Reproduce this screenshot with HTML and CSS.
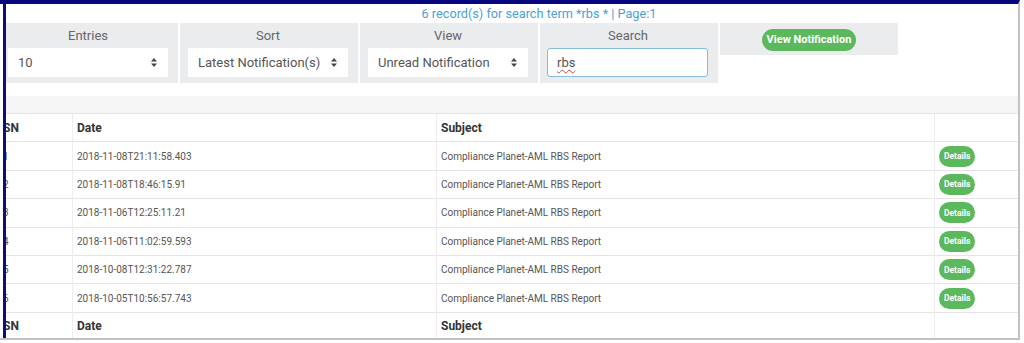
FILE: index.html
```html
<!DOCTYPE html>
<html lang="en">

<head>
    <meta charset="UTF-8">
    <title>Notifications</title>
    <link rel="stylesheet" href="styles.css">
</head>

<body>
    <div class="frame">
        <div class="page">
            <div class="resultInfo">6 record(s) for search term *rbs * | Page:1</div>

            <div class="filters">
                <div class="filterCol">
                    <div class="filterLabel">Entries</div>
                    <div class="selectBox"><span>10</span><span class="arrows"><svg width="6" height="9" viewBox="0 0 6 9"><path d="M3 0L6 3.5H0z M3 9L6 5.5H0z" fill="#444"/></svg></span></div>
                </div>
                <div class="filterCol">
                    <div class="filterLabel">Sort</div>
                    <div class="selectBox"><span>Latest Notification(s)</span><span class="arrows"><svg width="6" height="9" viewBox="0 0 6 9"><path d="M3 0L6 3.5H0z M3 9L6 5.5H0z" fill="#444"/></svg></span></div>
                </div>
                <div class="filterCol">
                    <div class="filterLabel">View</div>
                    <div class="selectBox"><span>Unread Notification</span><span class="arrows"><svg width="6" height="9" viewBox="0 0 6 9"><path d="M3 0L6 3.5H0z M3 9L6 5.5H0z" fill="#444"/></svg></span></div>
                </div>
                <div class="filterCol">
                    <div class="filterLabel">Search</div>
                    <div class="searchBox"><span class="typo">rbs</span></div>
                </div>
                <div class="filterCol short">
                    <button class="btnGreen">View Notification</button>
                </div>
            </div>

            <div class="band"></div>

            <table class="notifTable">
                <colgroup>
                    <col style="width:74px">
                    <col style="width:364px">
                    <col style="width:498px">
                    <col style="width:84px">
                </colgroup>
                <thead>
                    <tr>
                        <th>SN</th>
                        <th>Date</th>
                        <th>Subject</th>
                        <th></th>
                    </tr>
                </thead>
                <tbody>
                    <tr>
                        <td>1</td>
                        <td>2018-11-08T21:11:58.403</td>
                        <td>Compliance Planet-AML RBS Report</td>
                        <td><button class="btnDetails">Details</button></td>
                    </tr>
                    <tr>
                        <td>2</td>
                        <td>2018-11-08T18:46:15.91</td>
                        <td>Compliance Planet-AML RBS Report</td>
                        <td><button class="btnDetails">Details</button></td>
                    </tr>
                    <tr>
                        <td>3</td>
                        <td>2018-11-06T12:25:11.21</td>
                        <td>Compliance Planet-AML RBS Report</td>
                        <td><button class="btnDetails">Details</button></td>
                    </tr>
                    <tr>
                        <td>4</td>
                        <td>2018-11-06T11:02:59.593</td>
                        <td>Compliance Planet-AML RBS Report</td>
                        <td><button class="btnDetails">Details</button></td>
                    </tr>
                    <tr>
                        <td>5</td>
                        <td>2018-10-08T12:31:22.787</td>
                        <td>Compliance Planet-AML RBS Report</td>
                        <td><button class="btnDetails">Details</button></td>
                    </tr>
                    <tr>
                        <td>6</td>
                        <td>2018-10-05T10:56:57.743</td>
                        <td>Compliance Planet-AML RBS Report</td>
                        <td><button class="btnDetails">Details</button></td>
                    </tr>
                </tbody>
                <tfoot>
                    <tr>
                        <th>SN</th>
                        <th>Date</th>
                        <th>Subject</th>
                        <th></th>
                    </tr>
                </tfoot>
            </table>
        </div>
    </div>
</body>

</html>
```

FILE: styles.css
```css
body {
    margin: 0;
    background: #fff;
    font-family: Roboto, "Liberation Sans", sans-serif;
}

.frame {
    width: 1018px;
    height: 334px;
    border-top: 4px solid #06067e;
    border-right: 2px solid #c2c2c2;
    border-bottom: 2px solid #c2c2c2;
    overflow: hidden;
}

.page {
    margin-left: 3px;
    border-left: 3px solid #0d0d80;
    height: 100%;
    overflow: hidden;
}

.resultInfo {
    height: 19px;
    line-height: 19px;
    font-size: 12.7px;
    color: #4a9fd9;
    text-align: center;
    padding-left: 54px;
}

/* filter bar */
.filters {
    display: flex;
    align-items: flex-start;
    gap: 2px;
    margin-left: -6px;
}

.filterCol {
    width: 160px;
    padding: 4px 10px 6px 8px;
    background: #ebecee;
}

.filterCol.short {
    height: 32px;
    padding: 5px 0 0;
    width: 178px;
    box-sizing: border-box;
    text-align: center;
}

.filterLabel {
    height: 17px;
    line-height: 17px;
    margin-bottom: 4px;
    font-size: 13px;
    color: #666;
    text-align: center;
}

.selectBox {
    height: 29px;
    display: flex;
    align-items: center;
    justify-content: space-between;
    padding: 0 11px 0 10px;
    background: #fff;
    font-size: 13px;
    color: #555;
}

.arrows {
    display: flex;
}

.searchBox {
    height: 27px;
    margin-left: -1px;
    line-height: 27px;
    padding-left: 9px;
    background: #fff;
    border: 1px solid #86bbe3;
    border-radius: 3px;
    font-size: 13px;
    color: #555;
}

.typo {
    text-decoration: underline wavy #e04040;
    text-decoration-thickness: 1px;
    text-underline-offset: 2px;
}

.btnGreen {
    height: 22px;
    padding: 0 5px;
    border: none;
    border-radius: 11px;
    background: #5cb85c;
    color: #fff;
    font-family: Roboto, "Liberation Sans", sans-serif;
    font-size: 11px;
    font-weight: bold;
}

.band {
    height: 17px;
    margin-top: 13px;
    background: #f5f5f5;
}

/* table */
.notifTable {
    width: 1020px;
    margin-left: -8px;
    border-collapse: collapse;
    table-layout: fixed;
}

.notifTable th,
.notifTable td {
    height: 27.4px;
    padding: 0 4px;
    border-top: 1px solid #e4e4e4;
    border-left: 1px solid #eee;
    text-align: left;
    vertical-align: middle;
}

.notifTable th {
    font-size: 12px;
    font-weight: bold;
    color: #333;
}

.notifTable td {
    font-size: 10px;
    color: #555;
}

.btnDetails {
    height: 21px;
    padding: 0 5px;
    border: none;
    border-radius: 11px;
    background: #5cb85c;
    color: #fff;
    font-family: Roboto, "Liberation Sans", sans-serif;
    font-size: 8.5px;
    font-weight: bold;
}
```
